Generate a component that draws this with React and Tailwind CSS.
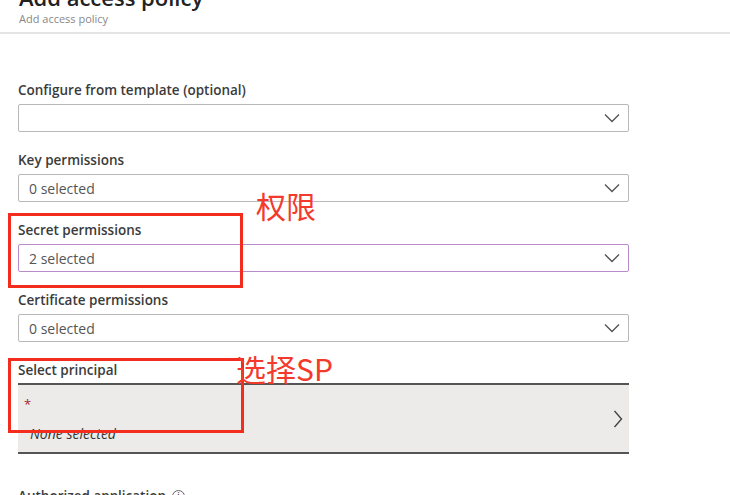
import React from 'react';

const font = { fontFamily: '"Open Sans", "Noto Sans", "Liberation Sans", sans-serif' };

const ChevronDown = () => (
    <svg width="16" height="10" viewBox="0 0 16 10" fill="none">
        <path d="M1 1.5 L8 8.5 L15 1.5" stroke="#555" strokeWidth="1.4" />
    </svg>
);

const ChevronRight = () => (
    <svg width="10" height="18" viewBox="0 0 10 18" fill="none">
        <path d="M1.5 1 L8.5 9 L1.5 17" stroke="#444" strokeWidth="1.4" />
    </svg>
);

const SelectField = ({ label, value, active }) => (
    <div className="flex flex-col">
        <div className="h-[18px] text-[13.5px] font-semibold leading-[18px] text-[#3b3b3b]">{label}</div>
        <div
            className={`mt-[5px] flex h-[28px] items-center justify-between rounded-[2px] border pl-[10px] pr-[8px] ${
                active ? 'border-[#b98bcb]' : 'border-[#b8b8b8]'
            }`}
        >
            <span className="text-[14px] text-[#555]">{value}</span>
            <ChevronDown />
        </div>
    </div>
);

export default function App() {
    return (
        <div className="relative h-[495px] w-[730px] overflow-hidden bg-white" style={font}>
            {/* header */}
            <div className="px-[19px]">
                <div className="-mt-[17px] text-[22px] font-semibold leading-[28px] text-[#222]">Add access policy</div>
                <div className="mt-[1px] text-[11px] leading-[14px] text-[#888]">Add access policy</div>
            </div>
            <div className="mt-[6px] h-[2px] w-full bg-[#e4e4e4]" />

            {/* form */}
            <div className="flex w-[629px] flex-col gap-[19px] pl-[18px] pt-[47px]">
                <SelectField label="Configure from template (optional)" value="" />
                <SelectField label="Key permissions" value="0 selected" />
                <SelectField label="Secret permissions" value="2 selected" active />
                <SelectField label="Certificate permissions" value="0 selected" />

                <div className="flex flex-col">
                    <div className="h-[18px] text-[13.5px] font-semibold leading-[18px] text-[#3b3b3b]">Select principal</div>
                    <div className="mt-[4px] flex h-[71px] items-center justify-between border-y-2 border-[#555] bg-[#edebe9] pl-[6px] pr-[6px]">
                        <div className="flex flex-col pt-[4px]">
                            <span className="h-[14px] text-[13px] leading-[14px] text-[#a4262c]">*</span>
                            <span className="mt-[12px] pl-[6px] text-[14px] italic text-[#333]">None selected</span>
                        </div>
                        <ChevronRight />
                    </div>
                </div>

                <div className="mt-[13px] flex items-center gap-[6px] text-[13.5px] font-semibold text-[#3b3b3b]">
                    Authorized application
                    <span className="flex h-[13px] w-[13px] items-center justify-center rounded-full border border-[#666] text-[9px]">i</span>
                </div>
            </div>

            {/* red annotations */}
            <div className="absolute left-[8px] top-[213px] h-[75px] w-[235px] border-[3px] border-[#f32c1e]" />
            <div className="absolute left-[8px] top-[358px] h-[75px] w-[236px] border-[3px] border-[#f32c1e]" />
            <div
                className="absolute left-[256px] top-[185px] text-[30px] leading-[40px] text-[#f33a2c]"
                style={{ fontFamily: '"Noto Sans CJK SC", sans-serif' }}
            >
                权限
            </div>
            <div
                className="absolute left-[236px] top-[348px] text-[30px] leading-[40px] text-[#f33a2c]"
                style={{ fontFamily: '"Noto Sans CJK SC", "Liberation Sans", sans-serif' }}
            >
                选择SP
            </div>
        </div>
    );
}
